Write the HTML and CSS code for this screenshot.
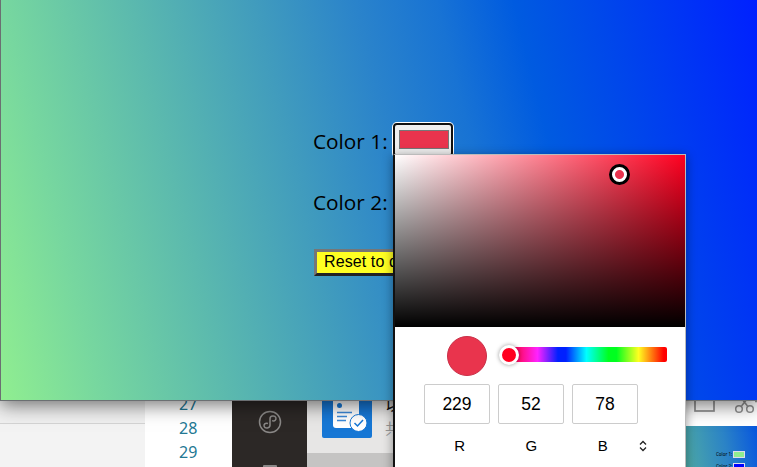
FILE: index.html
```html
<!DOCTYPE html>
<html lang="en">
<head>
<meta charset="utf-8">
<title>Gradient generator</title>
<link rel="stylesheet" href="styles.css">
</head>
<body>
<main class="desktop">
  <div class="background">
    <section class="sidebar"></section>
    <section class="editor"><span>27</span><span>28</span><span>29</span></section>
    <section class="rail">
      <svg width="75" height="75" viewBox="0 0 75 75" fill="none" stroke="#8a8887" stroke-width="1.500">
        <circle cx="38" cy="30" r="10.5"/>
        <path d="M36 31.500c-3-1-4.500 1-3.800 3 .8 2.200 5.800 2 5.800-1.200v-6.500c0-3.400 5-3.500 5.800-1.200.7 2-.8 4-3.800 3"/>
        <rect x="31" y="73" width="14" height="4" rx="1" fill="#8a8887" stroke="none"/>
      </svg>
    </section>
    <section class="chat">
      <svg class="avatar" width="50" height="46" viewBox="0 0 50 46">
        <path d="M0 0h50v44q0 2-2 2H2q-2 0-2-2z" fill="#1677d5"/>
        <path d="M11 0h26v36H14q-3 0-3-3z" fill="#fff"/>
        <circle cx="17.500" cy="13.500" r="2.500" fill="#1677d5"/>
        <path d="M15 20.500h15M15 24.500h10M15 28.500h9" stroke="#3b89d8" stroke-width="1.300"/>
        <circle cx="36.500" cy="31" r="8.500" fill="#fff" stroke="#1677d5"/>
        <path d="m32.500 31 3 3 5.500-6" fill="none" stroke="#1677d5" stroke-width="1.500"/>
      </svg>
      <div class="message"><b>以</b><span>共</span></div>
      <div class="selected"></div>
    </section>
    <section class="preview-side">
      <svg width="71" height="34" viewBox="0 0 71 34" fill="none" stroke="#909090">
        <rect x="9" y="2" width="19" height="17" stroke-width="1.700"/>
        <path d="m53.500 4 8 10M63.500 4l-8 10M69 9.500h2" stroke-width="1.500"/>
        <circle cx="53" cy="17" r="3.300" stroke-width="1.500"/>
        <circle cx="64" cy="17" r="3.300" stroke-width="1.500"/>
      </svg>
      <div class="thumb"><p>Color 1: <i></i></p><p>Color 2: <i class="blue"></i></p></div>
    </section>
  </div>
  <div class="window">
    <form class="controls">
      <label>Color 1: <span class="well"><span></span></span></label>
      <label>Color 2:</label>
      <button type="button">Reset to default</button>
    </form>
  </div>
  <div class="picker">
    <div class="spectrum"><span class="cursor"></span></div>
    <div class="hue-row"><span class="swatch"></span><div class="hue"><span class="thumb-dot"></span></div></div>
    <div class="fields"><span>229</span><span>52</span><span>78</span></div>
    <div class="names"><span>R</span><span>G</span><span>B</span>
      <svg width="8" height="12" viewBox="0 0 8 12" fill="none" stroke="#222" stroke-width="1.300"><path d="m1 4.500 3-3 3 3M1 7.500l3 3 3-3"/></svg>
    </div>
  </div>
</main>
</body>
</html>
```
FILE: styles.css
```css
* { box-sizing: border-box; }
body { margin: 0; overflow: hidden; font-family: "Liberation Sans", sans-serif; }
.desktop { position: relative; width: 757px; height: 467px; overflow: hidden; background: #fff; }

.background { display: flex; height: 467px; padding-top: 392px; }
.sidebar { width: 145px; background: linear-gradient(#f0f0f0 31px, #d4d4d4 31px 32px, #f3f3f3 32px); }
.editor { width: 87px; padding-left: 34px; font: 16px/24px "Noto Sans", sans-serif; color: #237893; }
.editor span { display: block; }
.rail { width: 75px; background: #2c2826; }
.rail svg, .preview-side svg { display: block; }
.chat { display: grid; grid-template: 61px 1fr / 78px 1fr; width: 88px; background: #e7e6e5; }
.avatar { margin-left: 15px; }
.message { color: #111; font: 17px/24px "Noto Sans CJK SC", sans-serif; }
.message b, .message span { display: block; width: 20px; font-weight: 400; }
.message span { color: #999; font-size: 15px; }
.selected { grid-column: 1 / 3; background: #c5c4c3; }
.preview-side { width: 71px; margin-left: 291px; }
.thumb { height: 41px; padding: 22px 0 0 30px; background: linear-gradient(80deg, #4da9a6, #2b83c6 55%, #0756df); }
.thumb p { display: flex; align-items: center; gap: 1px; margin: 0; height: 12px; font: 4.5px/8px "Noto Sans", sans-serif; white-space: nowrap; }
.thumb i { flex: none; width: 12px; height: 7px; background: #90ee90; border: 1px solid #dde; }
.thumb i.blue { background: #00f; }

.window {
  position: absolute; inset: 0 -1px auto 0; height: 401px;
  border: solid #6b6f72; border-width: 0 0 1px 1px;
  background: linear-gradient(76deg, #90ee90 0, #77d79f 11.7%, #5bb9ae 26.8%, #419cbd 41%, #2a83cb 53%, #1873d4 62.4%, #005be0 71.4%, #0048ea 81%, #0034f5 90.6%, #0020ff 100%);
  box-shadow: 0 4px 18px rgba(0, 0, 0, .55);
}
.controls { display: flex; flex-direction: column; align-items: flex-start; padding: 123px 0 0 312px; }
.controls label { display: flex; align-items: center; height: 37px; margin-bottom: 24px; font: 20.8px/37px "Open Sans", sans-serif; white-space: pre; }
.well { width: 60px; height: 34px; margin: -4px 0 0 0; padding: 5px 4px; border: 2px solid #101010; border-radius: 4px; background: #efefef; box-shadow: 0 0 0 1px #fff; }
.well span { display: block; width: 50px; height: 19px; background: #e9344d; border: 1px solid #777; }
.controls button { width: 140px; height: 27px; margin: 4px 0 0 1px; padding: 0 0 2px 7px; border: 3px solid; border-color: #767676 #222 #222 #767676; background: #ffff22; color: #000; font: 16px/18px "Liberation Sans", sans-serif; letter-spacing: .1px; text-align: left; white-space: nowrap; }

.picker { position: absolute; left: 393px; top: 154px; width: 293px; height: 330px; border: 1px solid #bbb; border-width: 1px 1px 0 2px; border-left-color: #111; background: #fff; box-shadow: 0 2px 10px rgba(0, 0, 0, .4); }
.spectrum { position: relative; height: 172px; background: linear-gradient(to top, #000, transparent), linear-gradient(to right, #fff, #ff0020); }
.cursor { position: absolute; left: 214px; top: 9px; width: 21px; height: 21px; border: 3px solid #000; border-radius: 50%; background: radial-gradient(circle, #e9344d 4px, #fff 5px); }
.hue-row { display: flex; align-items: center; height: 57px; padding: 1px 18px 0 52px; }
.swatch { width: 40px; height: 40px; margin-right: 22px; border: 1px solid #c93048; border-radius: 50%; background: #e9344d; }
.hue { position: relative; width: 158px; height: 15px; margin-top: -3px; border-radius: 2px; background: linear-gradient(to right, #ff0020, #ff22ff 18%, #0020ff 31% 36%, #0ff 49%, #00ff20 63% 68%, #ffff20 82%, #f00 98%); }
.thumb-dot { position: absolute; left: -10px; top: -2px; width: 20px; height: 20px; border: 3px solid #fff; border-radius: 50%; background: #ff0020; box-shadow: 0 0 4px rgba(0, 0, 0, .4); }
.fields { display: flex; gap: 8px; padding-left: 29px; }
.fields span { width: 66px; height: 40px; border: 1px solid #ccc; border-radius: 2px; font-size: 17.500px; line-height: 38px; text-align: center; }
.names { display: flex; align-items: center; height: 43px; padding-left: 29px; font-size: 15px; }
.names span { width: 71.500px; text-align: center; }
```
